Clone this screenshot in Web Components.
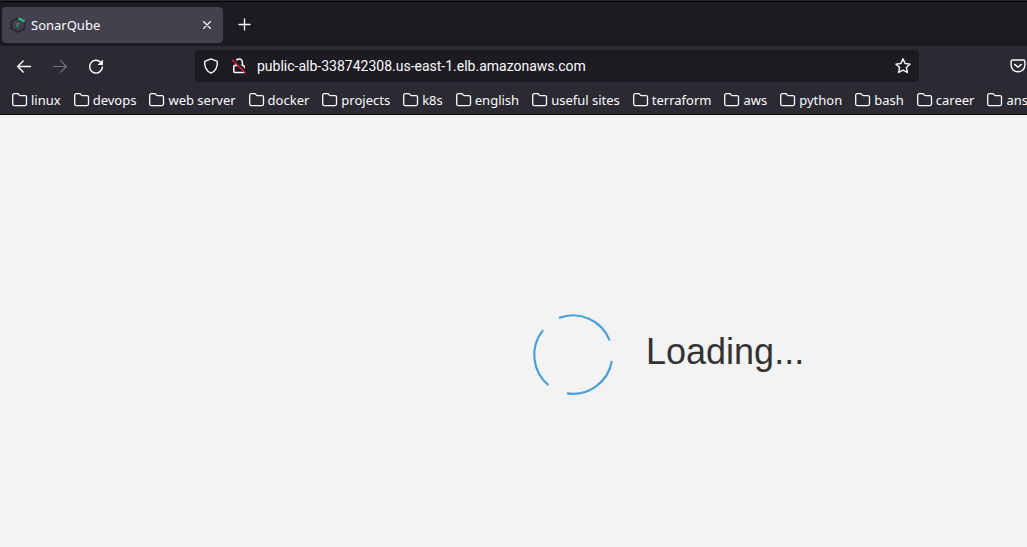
<!DOCTYPE html>
<html lang="en">
<head>
<meta charset="utf-8">
<title>SonarQube</title>
<style>
html, body { margin: 0; height: 100%; }
body { font-family: "Noto Sans", "Open Sans", sans-serif; font-size: 13px; line-height: 20px; color: #fbfbfe; background: #f3f3f3; overflow: hidden; }
</style>
</head>
<body>
<browser-window></browser-window>
<script>
const define = (name, html, setup) => customElements.define(name, class extends HTMLElement {
  constructor() {
    super();
    const t = document.createElement('template');
    t.innerHTML = '<style>*{box-sizing:border-box}button{font:inherit;color:inherit;background:none;border:0;padding:0;margin:0;cursor:pointer}svg{display:block;flex:none;overflow:visible}</style>' + html;
    this.attachShadow({ mode: 'open' }).append(t.content.cloneNode(true));
    if (setup) setup.call(this, this.shadowRoot);
  }
});

const line = 'fill="none" stroke="currentColor" stroke-linecap="round" stroke-linejoin="round"';
const icons = {
  back: `<path ${line} stroke-width="1.4" d="M14.5 8.5H1.6M7.2 2.9L1.6 8.5l5.6 5.6"/>`,
  forward: `<path ${line} stroke-width="1.2" d="M1.5 8.5h12.9M8.8 2.9L14.4 8.5l-5.6 5.6"/>`,
  reload: `<path ${line} stroke-width="1.4" d="M14.4 9A6.4 6.4 0 1 1 12.6 4.2"/><path fill="currentColor" d="M15 1.6v5a.5.5 0 0 1-.5.5H9.6z"/>`,
  close: `<path ${line} stroke-width="1.1" d="M4.5 4.5l7 7M11.5 4.5l-7 7"/>`,
  plus: `<path ${line} stroke-width="1.3" d="M7.5 2v11M2 7.5h11"/>`,
  shield: `<path ${line} stroke-width="1.4" d="M8 .9L14.3 3.4C14.7 8.4 12.8 13 8 15.1C3.2 13 1.3 8.4 1.7 3.4Z"/>`,
  lock: `<rect ${line} stroke-width="1.5" x="2.8" y="7.6" width="10.4" height="7" rx="1"/><path ${line} stroke-width="1.5" d="M5 7.2V4.3a3.2 3.2 0 0 1 6.4 0v3.2"/><path stroke="#1c1b22" stroke-width="3" d="M2.5 1.5l13 13"/><path stroke="#e9133f" stroke-width="1.5" stroke-linecap="round" d="M1.3 2l13 12.8"/>`,
  star: `<path ${line} stroke-width="1.4" d="M8 .9l2.1 4.6 5 .6-3.7 3.4 1 5L8 12.1l-4.4 2.4 1-5L.9 6.1l5-.6z"/>`,
  pocket: `<path ${line} stroke-width="1.4" d="M2.6 2h10.8a1.5 1.5 0 0 1 1.5 1.5v3.8a6.9 6.5 0 0 1-13.8 0V3.5A1.5 1.5 0 0 1 2.6 2z"/><path ${line} stroke-width="1.4" d="M4.7 6.4L8 9.3l3.3-2.9"/>`,
  folder: `<path ${line} stroke-width="1.3" d="M.7 3.2a1.5 1.5 0 0 1 1.5-1.5h3.2a1.8 1.8 0 0 1 1.3.6l.7.8a1.6 1.6 0 0 0 1.2.5h4.4a1.5 1.5 0 0 1 1.5 1.5v7a1.5 1.5 0 0 1-1.5 1.5H2.2a1.5 1.5 0 0 1-1.5-1.5z"/>`,
  site: `<path fill="none" stroke="#262633" stroke-width="1.6" d="M8 .9l6.6 3.6v7L8 15.1l-6.6-3.6v-7z"/><path stroke="#2ebd7b" stroke-width="2.2" d="M8.4 1.1l6.2 3.4"/><path fill="none" stroke="#2a9f6d" stroke-width="1.3" d="M7.2 10.6V6M7.2 8q.4-1.6 2.2-1.4"/>`
};

define('ui-icon', '<style>:host{display:block;flex:none;width:16px;height:16px}</style><svg width="16" height="16" viewBox="0 0 16 16" aria-hidden="true"></svg>', function (root) {
  root.querySelector('svg').innerHTML = icons[this.getAttribute('name')];
});

define('tab-strip', `<style>
:host{display:flex;align-items:center;height:46px;padding:0 2px;border-top:1px solid #2b2a33;background:#1c1b22;box-shadow:inset 0 1px #000}
.tab{display:flex;align-items:center;width:221px;height:36px;margin-top:2px;border-radius:4px;background:#42414d;padding:0 8px}
.title{flex:1;display:flex;align-items:center;gap:5px;text-align:left}
.new{margin:2px 0 0 14px}
</style>
<div class="tab"><button class="title" role="tab" aria-selected="true"><ui-icon name="site"></ui-icon><span>SonarQube</span></button>
<button class="close" aria-label="Close tab"><ui-icon name="close"></ui-icon></button></div>
<button class="new" aria-label="New tab"><ui-icon name="plus"></ui-icon></button>`);

define('address-bar', `<style>
:host{display:flex;align-items:center;flex:1;height:32px;border-radius:4px;background:#1c1b22;padding:0 8px}
.lock{margin:0 10px 0 12px}
input{flex:1;min-width:0;height:24px;border:0;padding:0;outline:0;background:none;color:#fbfbfe;font-family:Roboto,"Noto Sans",sans-serif;font-size:14px}
</style>
<button aria-label="Tracking protection"><ui-icon name="shield"></ui-icon></button>
<button class="lock" aria-label="Connection not secure"><ui-icon name="lock"></ui-icon></button>
<input type="text" aria-label="Address" value="public-alb-338742308.us-east-1.elb.amazonaws.com">
<button aria-label="Bookmark this page"><ui-icon name="star"></ui-icon></button>`);

define('nav-bar', `<style>
:host{display:flex;align-items:center;height:40px;padding-left:16px}
.nav{display:flex;gap:20px;width:179px}
.forward{color:#76757e}
.end{display:flex;justify-content:flex-end;width:108px;padding-right:1px}
</style>
<div class="nav"><button aria-label="Back"><ui-icon name="back"></ui-icon></button>
<button class="forward" aria-label="Forward"><ui-icon name="forward"></ui-icon></button>
<button aria-label="Reload"><ui-icon name="reload"></ui-icon></button></div>
<address-bar></address-bar>
<div class="end"><button aria-label="Save to Pocket"><ui-icon name="pocket"></ui-icon></button></div>`);

define('bookmark-folder', `<style>
:host{display:block;flex:none}
button{display:flex;align-items:center;gap:3px;white-space:nowrap}
</style><button><ui-icon name="folder"></ui-icon><span><slot></slot></span></button>`);

define('bookmarks-bar', `<style>
:host{display:flex;align-items:center;gap:13px;height:28px;padding-left:12px;overflow:hidden}
</style>` + ['linux','devops','web server','docker','projects','k8s','english','useful sites','terraform','aws','python','bash','career','ansi']
  .map(n => `<bookmark-folder>${n}</bookmark-folder>`).join(''));

define('loading-view', `<style>
:host{display:flex;align-items:center;flex:1;align-self:stretch;padding:48px 0 0 532px;color:#333;font-family:"Liberation Sans",Arial,sans-serif;font-size:36px;line-height:40px}
.row{display:flex;align-items:center;gap:32px}
.text{margin:0;padding-bottom:6px}
</style>
<div class="row" role="status">
<svg width="82" height="82" viewBox="0 0 82 82" aria-hidden="true"><g fill="none" stroke="#4b9fd5" stroke-width="2.2">
<path d="M27 3.9A39.4 39.4 0 0 1 77.6 26.4"/><path d="M79.8 47A39.4 39.4 0 0 1 35 79.4"/><path d="M16.4 71.1A39.4 39.4 0 0 1 11 16.1"/></g></svg>
<p class="text">Loading...</p></div>`);

define('browser-window', `<style>
:host{display:flex;flex-direction:column;min-height:100vh}
header{background:#2b2a33;border-bottom:1px solid #0c0c0d}
</style>
<header><tab-strip></tab-strip><nav-bar></nav-bar><bookmarks-bar></bookmarks-bar></header>
<loading-view></loading-view>`);
</script>
</body>
</html>
